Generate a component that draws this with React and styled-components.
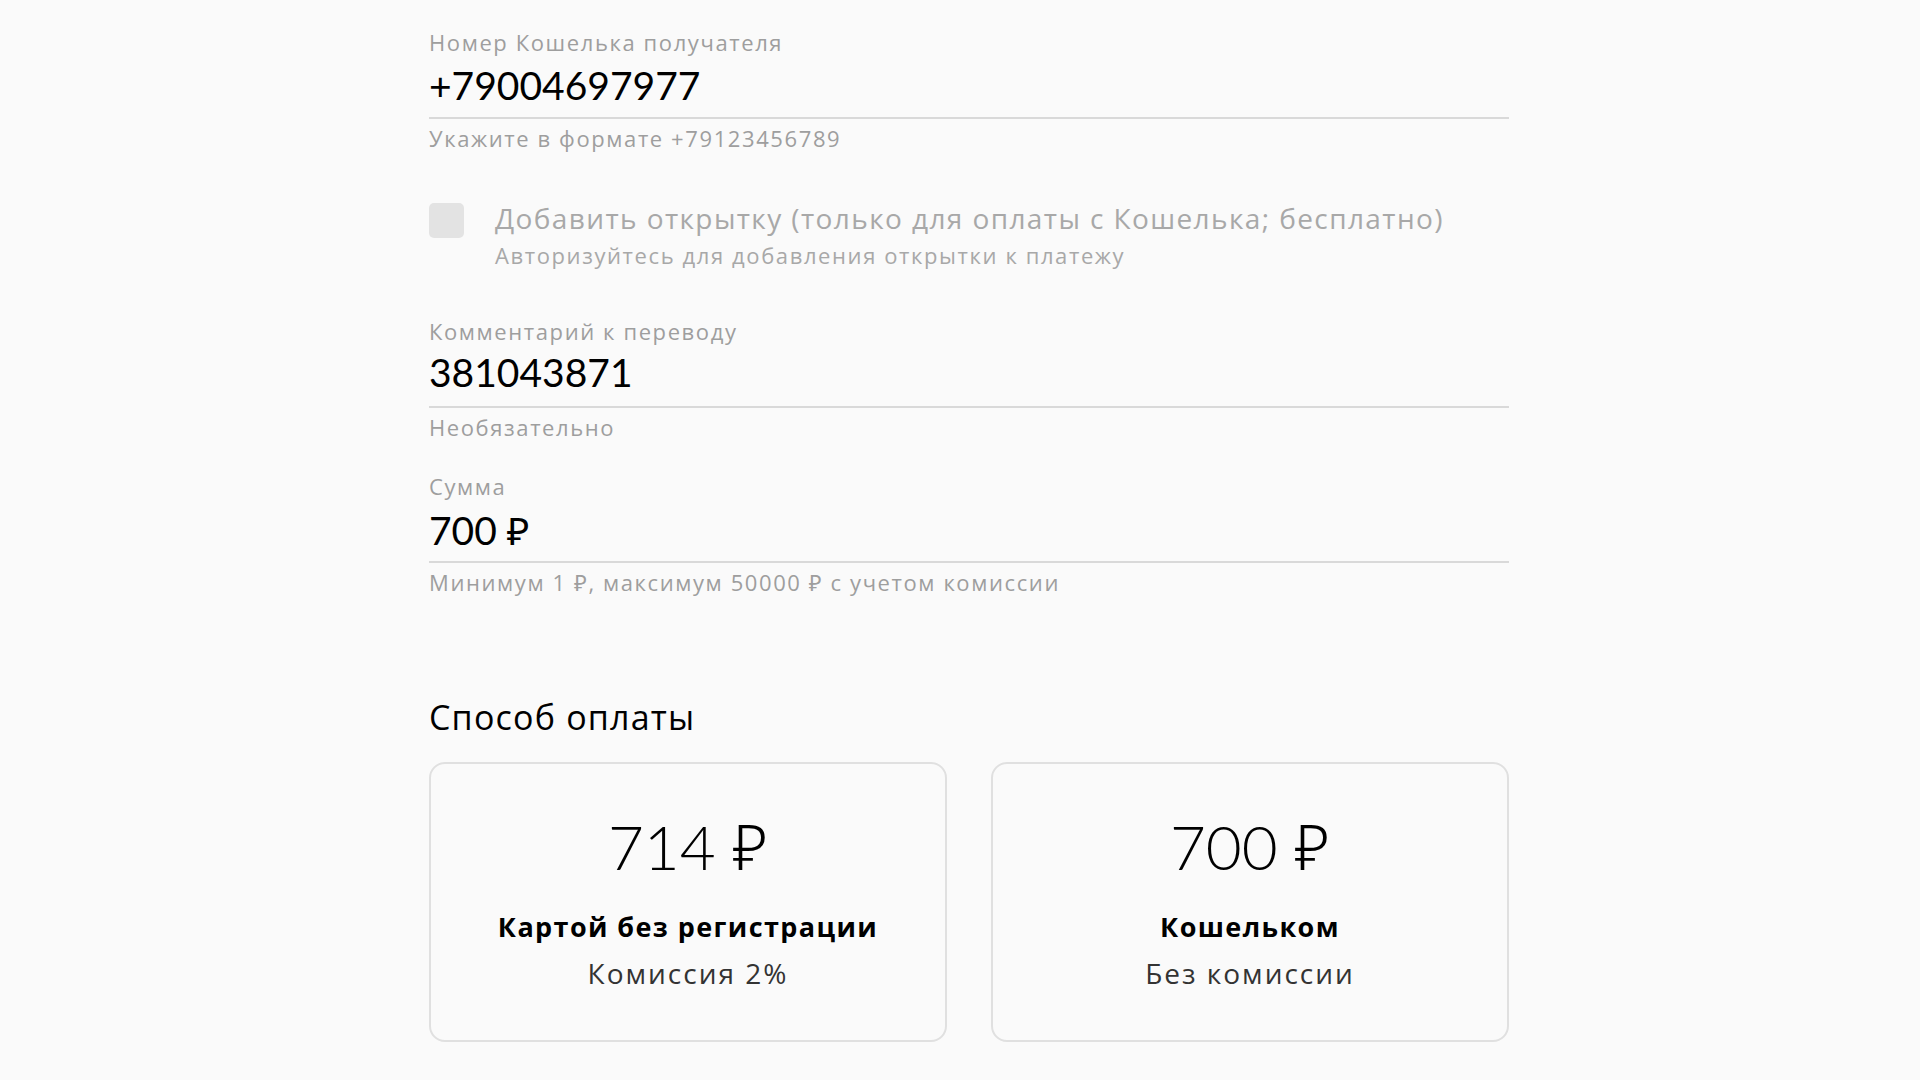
import React, { useState } from 'react';
import styled, { createGlobalStyle } from 'styled-components';

const GlobalStyle = createGlobalStyle`
    html, body {
        margin: 0;
        padding: 0;
        background: #fafafa;
    }
    body {
        font-family: "Open Sans", "Noto Sans", "Liberation Sans", sans-serif;
        color: #000;
    }
`;

// Main column holding the whole payment form
const Page = styled.div`
    width: 1080px;
    margin-left: calc(50% - 531px);
    padding-top: 29px;
    padding-bottom: 34px;
`;

const Field = styled.div`
    display: flex;
    flex-direction: column;
    margin-bottom: ${p => p.$gap ?? 31}px;
`;

const Label = styled.label`
    font-size: 22px;
    line-height: 26px;
    letter-spacing: 1.6px;
    color: #9e9e9e;
`;

const ValueInput = styled.input`
    margin-top: ${p => p.$offset ?? 6}px;
    height: 48px;
    padding: 0 0 ${p => 14 - (p.$offset ?? 6)}px 0;
    border: none;
    border-bottom: 2px solid #d9d9d9;
    background: transparent;
    font-family: Lato, "Noto Sans", sans-serif;
    font-size: 39px;
    line-height: 48px;
    color: #000;
    outline: none;
    box-sizing: content-box;
`;

const Hint = styled.div`
    margin-top: 6px;
    font-size: 22px;
    line-height: 26px;
    letter-spacing: 1.6px;
    color: #9e9e9e;
`;

// Postcard checkbox row
const CheckRow = styled.div`
    display: flex;
    align-items: flex-start;
    gap: 31px;
    margin-bottom: 50px;
`;

const CheckBox = styled.span`
    flex: none;
    width: 35px;
    height: 35px;
    margin-top: 2px;
    border-radius: 5px;
    background: #e3e3e3;
`;

const CheckText = styled.div`
    display: flex;
    flex-direction: column;
    gap: 7px;
`;

const CheckTitle = styled.div`
    font-size: 28px;
    line-height: 34px;
    letter-spacing: 1.4px;
    color: #a8a8a8;
`;

const CheckSub = styled.div`
    font-size: 22px;
    line-height: 26px;
    letter-spacing: 1.6px;
    color: #a8a8a8;
`;

const SectionTitle = styled.h2`
    margin: 100px 0 23px;
    font-size: 34px;
    line-height: 44px;
    letter-spacing: 1.2px;
    font-weight: 400;
    color: #000;
`;

const Methods = styled.div`
    display: grid;
    grid-template-columns: 1fr 1fr;
    gap: 44px;
`;

const MethodCard = styled.button`
    height: 280px;
    box-sizing: border-box;
    display: flex;
    flex-direction: column;
    align-items: center;
    padding: 45px 20px 0;
    border: 2px solid ${p => (p.$active ? '#bdbdbd' : '#e0e0e0')};
    border-radius: 16px;
    background: transparent;
    font-family: inherit;
    cursor: pointer;
`;

const Amount = styled.div`
    font-family: Lato, "Noto Sans", sans-serif;
    font-size: 62px;
    line-height: 74px;
    font-weight: 300;
    color: #000;
`;

const MethodName = styled.div`
    margin-top: 27px;
    font-size: 27px;
    line-height: 34px;
    letter-spacing: 1.4px;
    font-weight: 700;
    color: #000;
`;

const MethodFee = styled.div`
    margin-top: 12px;
    font-size: 28px;
    line-height: 34px;
    letter-spacing: 2px;
    color: #333;
`;

const methods = [
    { id: 'card', amount: '714 ₽', name: 'Картой без регистрации', fee: 'Комиссия 2%' },
    { id: 'wallet', amount: '700 ₽', name: 'Кошельком', fee: 'Без комиссии' },
];

const App = () => {
    const [form, setForm] = useState({
        phone: '+79004697977',
        comment: '381043871',
        sum: '700 ₽',
    });
    const [method, setMethod] = useState(null);

    const handleChange = (e) => {
        const { name, value } = e.target;
        setForm(prev => ({ ...prev, [name]: value }));
    };

    return (
        <>
            <GlobalStyle />
            <Page>
                {/* Recipient wallet */}
                <Field $gap={50}>
                    <Label>Номер Кошелька получателя</Label>
                    <ValueInput name="phone" value={form.phone} onChange={handleChange} />
                    <Hint>Укажите в формате +79123456789</Hint>
                </Field>

                <CheckRow>
                    <CheckBox />
                    <CheckText>
                        <CheckTitle>Добавить открытку (только для оплаты с Кошелька; бесплатно)</CheckTitle>
                        <CheckSub>Авторизуйтесь для добавления открытки к платежу</CheckSub>
                    </CheckText>
                </CheckRow>

                <Field $gap={33}>
                    <Label>Комментарий к переводу</Label>
                    <ValueInput $offset={4} name="comment" value={form.comment} onChange={handleChange} />
                    <Hint>Необязательно</Hint>
                </Field>

                <Field $gap={0}>
                    <Label>Сумма</Label>
                    <ValueInput $offset={7} name="sum" value={form.sum} onChange={handleChange} />
                    <Hint>Минимум 1 ₽, максимум 50000 ₽ с учетом комиссии</Hint>
                </Field>

                {/* Payment method */}
                <SectionTitle>Способ оплаты</SectionTitle>
                <Methods>
                    {methods.map(m => (
                        <MethodCard key={m.id} $active={method === m.id} onClick={() => setMethod(m.id)}>
                            <Amount>{m.amount}</Amount>
                            <MethodName>{m.name}</MethodName>
                            <MethodFee>{m.fee}</MethodFee>
                        </MethodCard>
                    ))}
                </Methods>
            </Page>
        </>
    );
};

export default App;
